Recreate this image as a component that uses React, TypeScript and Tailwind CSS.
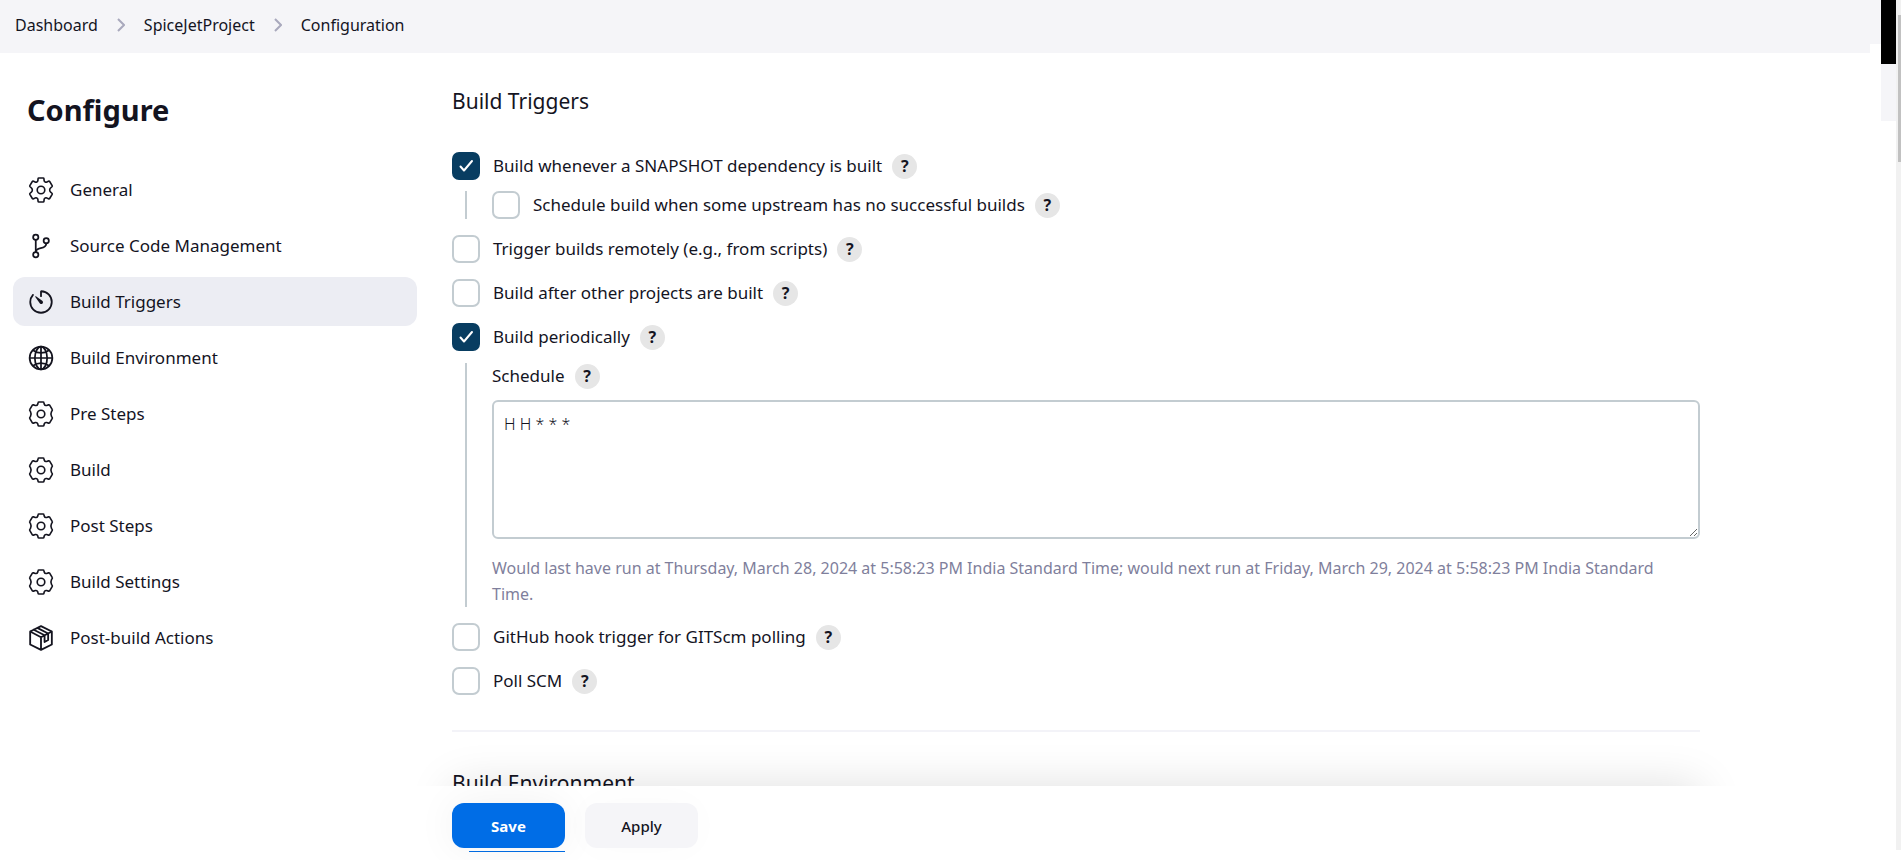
import React from "react";
import { IoGitBranchOutline, IoTimerOutline, IoGlobeOutline } from "react-icons/io5";

type IconProps = { className?: string };

function CogIcon({ className }: IconProps) {
  return (
    <svg viewBox="0 0 24 24" fill="none" stroke="currentColor" strokeWidth="1.5" strokeLinejoin="round" className={className} aria-hidden="true">
      <path d="M10 .9H14Q14.600.9 14.700 1.600L14.900 3.300Q15 4.200 15.900 4.600Q16.600 5 17.400 4.600L18.900 3.900Q19.600 3.600 20 4.200L22.300 7.900Q22.600 8.500 22.100 9L20.900 10Q20 10.700 20 12Q20 13.300 20.900 14L22.100 15Q22.600 15.500 22.300 16.100L20 19.800Q19.600 20.400 18.900 20.100L17.400 19.400Q16.600 19 15.900 19.400Q15 19.800 14.900 20.700L14.700 22.400Q14.600 23.100 14 23.100H10Q9.400 23.100 9.300 22.400L9.100 20.700Q9 19.800 8.100 19.400Q7.400 19 6.600 19.400L5.100 20.100Q4.400 20.400 4 19.800L1.700 16.100Q1.400 15.500 1.900 15L3.100 14Q4 13.300 4 12Q4 10.700 3.100 10L1.900 9Q1.400 8.500 1.700 7.900L4 4.200Q4.400 3.600 5.100 3.900L6.600 4.600Q7.400 5 8.100 4.600Q9 4.200 9.100 3.300L9.300 1.600Q9.400.9 10 .9Z" />
      <circle cx="12" cy="12" r="3.500" />
    </svg>
  );
}

function GearIcon({ className }: IconProps) {
  return (
    <svg viewBox="0 0 24 24" fill="none" stroke="currentColor" strokeWidth="1.5" strokeLinejoin="round" className={className} aria-hidden="true">
      <path d="M10.100.9H13.900Q14.600.9 14.700 1.600L15 2.900Q15.600 4.500 17.200 4.100L18.900 3.600Q19.600 3.400 20.100 4L22.300 7.700Q22.700 8.300 22.300 8.900L21.700 9.800Q20.600 12 21.700 14.200L22.300 15.100Q22.700 15.700 22.300 16.300L20.100 20Q19.600 20.600 18.900 20.400L17.200 19.900Q15.600 19.500 15 21.100L14.700 22.400Q14.600 23.100 13.900 23.100H10.100Q9.400 23.100 9.300 22.400L9 21.100Q8.400 19.500 6.800 19.900L5.100 20.400Q4.400 20.600 3.900 20L1.700 16.300Q1.300 15.700 1.700 15.100L2.300 14.200Q3.400 12 2.300 9.800L1.700 8.900Q1.300 8.300 1.700 7.700L3.900 4Q4.400 3.400 5.100 3.600L6.800 4.100Q8.400 4.500 9 2.900L9.300 1.600Q9.400.9 10.100.9Z" />
      <circle cx="12" cy="12" r="3.500" />
    </svg>
  );
}

function PackageIcon({ className }: IconProps) {
  return (
    <svg viewBox="0 0 24 24" fill="none" stroke="currentColor" strokeWidth="1.7" strokeLinejoin="round" strokeLinecap="round" className={className} aria-hidden="true">
      <path d="M12 1 22 6v12L12 23 2 18V6zM2 6l10 5.300L22 6M12 11.300V23M5.300 4.400l10 5.100v6.200l3.300-1.800V7.800l-10-5.100" />
    </svg>
  );
}

function BranchIcon({ className }: IconProps) {
  return <IoGitBranchOutline viewBox="18 18 476 476" className={className} aria-hidden="true" />;
}

function TimerIcon({ className }: IconProps) {
  return <IoTimerOutline viewBox="24 24 464 464" className={className} aria-hidden="true" />;
}

function GlobeIcon({ className }: IconProps) {
  return <IoGlobeOutline viewBox="18 18 476 476" className={className} aria-hidden="true" />;
}

const sections = [
  { name: "General", Icon: CogIcon },
  { name: "Source Code Management", Icon: BranchIcon },
  { name: "Build Triggers", Icon: TimerIcon },
  { name: "Build Environment", Icon: GlobeIcon },
  { name: "Pre Steps", Icon: GearIcon },
  { name: "Build", Icon: GearIcon },
  { name: "Post Steps", Icon: GearIcon },
  { name: "Build Settings", Icon: GearIcon },
  { name: "Post-build Actions", Icon: PackageIcon },
];

function Chevron() {
  return (
    <svg viewBox="0 0 8 14" fill="none" stroke="#a9a9bd" strokeWidth="2" className="mx-[19px] h-[14px] w-2" aria-hidden="true">
      <path d="m1 1 6 6-6 6" />
    </svg>
  );
}

function Help({ topic }: { topic: string }) {
  return (
    <button type="button" aria-label={`Help for ${topic}`} className="flex size-[25px] shrink-0 items-center justify-center rounded-full bg-[#e6e6e6] text-base font-bold">
      ?
    </button>
  );
}

function Option({ id, label, checked = false }: { id: string; label: string; checked?: boolean }) {
  return (
    <div className="flex h-7 items-center">
      <span className="grid size-7 shrink-0">
        <input
          id={id}
          type="checkbox"
          defaultChecked={checked}
          className="peer col-start-1 row-start-1 size-7 appearance-none rounded-[7px] border-2 border-[#c3ccd1] bg-white checked:border-[#083d61] checked:bg-[#083d61]"
        />
        <svg viewBox="0 0 28 28" fill="none" stroke="white" strokeWidth="2" strokeLinecap="round" strokeLinejoin="round" className="pointer-events-none invisible col-start-1 row-start-1 size-7 peer-checked:visible" aria-hidden="true">
          <path d="m8.500 14.500 3.500 4 8-9.500" />
        </svg>
      </span>
      <label htmlFor={id} className="mr-[10px] ml-[13px]">{label}</label>
      <Help topic={label} />
    </div>
  );
}

export default function App() {
  return (
    <div className="flex h-screen overflow-hidden bg-white font-['Noto_Sans',sans-serif] text-[17px] leading-[26px] text-[#14141f]">
      <div className="flex min-w-0 flex-1 flex-col">
        <nav aria-label="Breadcrumb" className="relative flex h-[53px] shrink-0 items-center bg-[#f5f5f8] px-[15px] pb-1 text-base">
          <a href="#dashboard">Dashboard</a>
          <Chevron />
          <a href="#project">SpiceJetProject</a>
          <Chevron />
          <a href="#configuration">Configuration</a>
          <span className="absolute right-0 bottom-0 h-[9px] w-[11px] bg-white" />
        </nav>
        <div className="flex min-h-0 flex-1">
          <aside className="w-[417px] shrink-0 pt-[35px] pl-[13px]">
            <h1 className="pl-[14px] text-[29px] leading-[44px] font-bold">Configure</h1>
            <ul className="mt-[33px] flex flex-col gap-[7px]">
              {sections.map(({ name, Icon }) => (
                <li key={name}>
                  <a
                    href={`#${name.toLowerCase().replaceAll(" ", "-")}`}
                    className={
                      name === "Build Triggers"
                        ? "flex h-[49px] items-center gap-4 rounded-xl bg-[#ecedf3] px-[15px]"
                        : "flex h-[49px] items-center gap-4 rounded-xl px-[15px]"
                    }
                  >
                    <Icon className="size-[26px] shrink-0" />
                    {name}
                  </a>
                </li>
              ))}
            </ul>
          </aside>
          <main className="flex min-w-0 flex-1 flex-col">
            <div className="relative min-h-0 flex-1 overflow-hidden pr-[181px] pl-[35px]">
              <h2 className="pt-[34px] text-[21px] leading-7">Build Triggers</h2>
              <form id="triggers" className="mt-[37px] flex flex-col gap-4">
                <div>
                  <Option id="snapshot" label="Build whenever a SNAPSHOT dependency is built" checked />
                  <div className="mt-[11px] ml-[13px] border-l-2 border-[#c3ccd1] pl-[25px]">
                    <Option id="upstream" label="Schedule build when some upstream has no successful builds" />
                  </div>
                </div>
                <Option id="remote" label="Trigger builds remotely (e.g., from scripts)" />
                <Option id="after" label="Build after other projects are built" />
                <div>
                  <Option id="periodic" label="Build periodically" checked />
                  <div className="mt-3 ml-[13px] border-l-2 border-[#c3ccd1] pl-[25px]">
                    <div className="flex items-center gap-[10px]">
                      <label htmlFor="schedule">Schedule</label>
                      <Help topic="Schedule" />
                    </div>
                    <textarea
                      id="schedule"
                      defaultValue="H H * * *"
                      className="mt-[11px] block h-[139px] w-full rounded-md border-2 border-[#c3ccd1] bg-white px-[10px] py-[9px] text-base leading-[26px] font-light"
                    />
                    <p className="mt-4 pr-3 text-base leading-[26px] text-[#7f7f9c]">
                      Would last have run at Thursday, March 28, 2024 at 5:58:23 PM India Standard Time; would next run at Friday, March 29, 2024 at 5:58:23 PM India Standard Time.
                    </p>
                  </div>
                </div>
                <Option id="github" label="GitHub hook trigger for GITScm polling" />
                <Option id="poll" label="Poll SCM" />
              </form>
              <hr className="mt-[35px] border-t-2 border-[#f3f3f8]" />
              <h2 className="mt-[37px] text-[21px] leading-7">Build Environment</h2>
              <div className="pointer-events-none absolute right-[181px] -bottom-20 left-[35px] h-20 shadow-[0_0_46px_rgba(0,0,0,0.13)]" />
            </div>
            <div className="h-[74px] shrink-0 overflow-hidden pt-[17px] pl-[35px]">
              <div className="flex gap-5 text-[15px]">
                <button type="submit" form="triggers" className="h-[45px] w-[113px] rounded-xl bg-[#006de6] font-bold text-white shadow-[0_0_40px_rgba(0,0,0,0.06)]">
                  Save
                </button>
                <button type="button" className="h-[45px] w-[113px] rounded-xl bg-[#f5f5f8] font-medium shadow-[0_0_40px_rgba(0,0,0,0.02)]">
                  Apply
                </button>
              </div>
              <div className="mt-[3px] ml-[17px] h-px w-24 bg-[#006de6]" />
            </div>
          </main>
        </div>
      </div>
      <div className="w-[15px] shrink-0">
        <div className="h-16 bg-black" />
        <div className="h-[57px] bg-[#f5f5f8]" />
      </div>
      <div className="mb-[10px] w-[5px] shrink-0 bg-[#f1f1f1] pt-[15px] pl-[2px]">
        <div className="h-[147px] bg-[#c1c1c1]" />
      </div>
    </div>
  );
}
